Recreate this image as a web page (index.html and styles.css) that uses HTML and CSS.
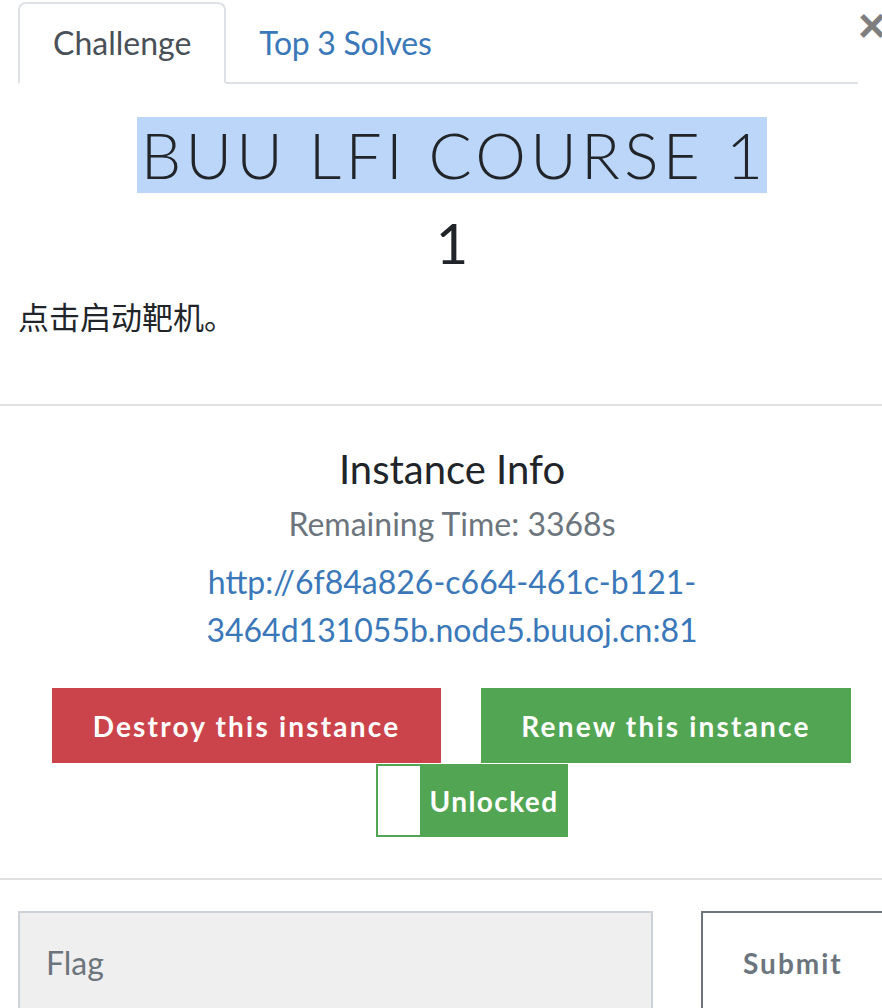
FILE: index.html
```html
<!DOCTYPE html>
<html>
<head>
<meta charset="utf-8">
<link rel="stylesheet" href="styles.css">
</head>
<body>
<div class="modal">
  <span class="close">&times;</span>
  <div class="body">
    <div class="tabs">
      <div class="tab active">Challenge</div>
      <div class="tab link">Top 3 Solves</div>
    </div>
    <h2 class="title"><span class="sel">BUU LFI COURSE 1</span></h2>
    <h3 class="value">1</h3>
    <p class="desc">点击启动靶机。</p>
  </div>
  <hr class="rule">
  <div class="body instance">
    <h5 class="inst-title">Instance Info</h5>
    <h6 class="remain">Remaining Time: 3368s</h6>
    <p class="url"><a href="#">http://6f84a826-c664-461c-b121-<br>3464d131055b.node5.buuoj.cn:81</a></p>
    <div class="btn-row">
      <div class="btn danger">Destroy this instance</div>
      <div class="btn success">Renew this instance</div>
    </div>
    <div class="unlock-row">
      <div class="unlock"><span class="unlock-blank"></span><span class="unlock-label">Unlocked</span></div>
    </div>
  </div>
  <hr class="rule rule2">
  <div class="body submit-row">
    <div class="flag">Flag</div>
    <div class="submit">Submit</div>
  </div>
</div>
</body>
</html>
```
FILE: styles.css
```css
html, body {
  margin: 0;
  padding: 0;
  background: #fff;
  overflow: hidden;
}
body {
  width: 882px;
  height: 1008px;
  font-family: "Lato", "Noto Sans CJK SC", sans-serif;
  color: #212529;
}
.modal {
  position: relative;
  width: 904px;
}
.close {
  position: absolute;
  left: 858px;
  top: 0px;
  font-size: 48px;
  line-height: 52px;
  font-weight: 700;
  color: #000;
  opacity: 0.5;
  font-family: "Liberation Sans", sans-serif;
}
.body {
  padding: 0 18px;
}
.tabs {
  display: flex;
  width: 840px;
  padding-top: 2px;
  border-bottom: 2px solid #dee2e6;
}
.tab {
  font-size: 32px;
  line-height: 48px;
  padding: 15px 33px 15px 33px;
  margin-bottom: -2px;
  border: 2px solid transparent;
  border-top-left-radius: 8px;
  border-top-right-radius: 8px;
}
.tab.active {
  color: #495057;
  border-color: #dee2e6 #dee2e6 #fff;
  background: #fff;
}
.tab.link {
  color: #3a78b9;
  padding-left: 31px;
  letter-spacing: -0.3px;
}
.title {
  margin: 33px 0 0;
  text-align: center;
  font-family: "Lato", sans-serif;
  font-weight: 300;
  font-size: 64px;
  letter-spacing: 4.3px;
  line-height: 76px;
}
.sel {
  display: inline-block;
  background: #bbd6f9;
  padding: 0 0 0 4px;
  color: #212529;
}
.value {
  margin: 16px 0 0;
  text-align: center;
  font-weight: 400;
  font-size: 56px;
  line-height: 67px;
}
.desc {
  margin: 16px 0 0;
  font-family: "Noto Sans CJK SC", sans-serif;
  font-size: 31px;
  line-height: 48px;
  height: 48px;
}
.rule {
  border: 0;
  height: 2px;
  background: #e1e1e1;
  margin: 64px 0 0;
  width: 882px;
}
.instance {
  text-align: center;
  width: 868px;
}
.inst-title {
  margin: 39px 0 0;
  font-size: 40px;
  font-weight: 400;
  line-height: 48px;
}
.remain {
  margin: 9px 0 0;
  font-size: 32px;
  font-weight: 400;
  color: #6c757d;
  line-height: 44px;
}
.url {
  margin: 12px 0 0;
  font-size: 32px;
  line-height: 48px;
}
.url a {
  color: #3a78b9;
  text-decoration: none;
}
.btn-row {
  display: flex;
  justify-content: flex-start;
  gap: 40px;
  margin-top: 34px;
  padding-left: 34px;
}
.btn {
  height: 75px;
  display: flex;
  align-items: center;
  justify-content: center;
  color: #fff;
  font-weight: 700;
  font-size: 28px;
  letter-spacing: 2.2px;
  flex-shrink: 0;
}
.danger {
  width: 389px;
  background: #cc444b;
}
.success {
  width: 370px;
  background: #52a552;
}
.unlock-row {
  display: flex;
  padding-left: 358px;
  margin-top: 1px;
}
.unlock {
  display: flex;
  height: 73px;
  border: 2px solid #52a552;
  border-right: 0;
  box-sizing: border-box;
}
.unlock-blank {
  width: 42px;
  background: #fff;
}
.unlock-label {
  width: 148px;
  background: #52a552;
  color: #fff;
  font-weight: 700;
  font-size: 28px;
  letter-spacing: 1.4px;
  display: flex;
  align-items: center;
  justify-content: center;
}
.rule2 {
  margin-top: 41px;
}
.submit-row {
  display: flex;
  gap: 48px;
  margin-top: 31px;
}
.flag {
  width: 635px;
  flex-shrink: 0;
  height: 110px;
  box-sizing: border-box;
  background: #efefef;
  border: 2px solid #ccd2d8;
  color: #6c757d;
  font-size: 32px;
  padding: 0 0 0 26px;
  line-height: 100px;
}
.submit {
  width: 200px;
  flex-shrink: 0;
  height: 110px;
  box-sizing: border-box;
  border: 2px solid #6c757d;
  color: #6c757d;
  font-weight: 700;
  font-size: 28px;
  letter-spacing: 2px;
  padding-left: 40px;
  line-height: 100px;
}
```
